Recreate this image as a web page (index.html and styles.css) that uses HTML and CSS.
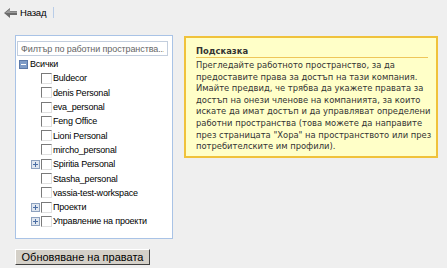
FILE: index.html
```html
<!DOCTYPE html>
<html lang="bg">
<head>
    <meta charset="UTF-8">
    <title>Права</title>
    <link rel="stylesheet" href="styles.css">
</head>
<body>
    <div class="toolbar">
        <a class="back-link" href="#">
            <svg class="back-icon" width="14" height="10" viewBox="0 0 14 10">
                <polygon points="0,5 6,0 6,3 13,3 13,7 6,7 6,10" fill="#6b6b6b"/>
                <polygon points="1,5 6,1 6,3.5 13,3.5 13,5" fill="#9a9a9a"/>
            </svg>
            <span>Назад</span>
        </a>
        <span class="sep"></span>
    </div>

    <div class="main">
        <div class="left">
            <div class="tree-panel">
                <input class="filter" type="text" placeholder="Филтър по работни пространства...">
                <ul class="tree">
                    <li class="root">
                        <span class="node">
                            <svg class="toggle" width="9" height="9" viewBox="0 0 9 9">
                                <rect x="0.5" y="0.5" width="8" height="8" fill="#7e9cc8" stroke="#5a78a8"/>
                                <rect x="2" y="4" width="5" height="1" fill="#fff"/>
                            </svg>
                            <span class="label">Всички</span>
                        </span>
                        <ul class="children">
                            <li><span class="cb"></span><span class="label">Buldecor</span></li>
                            <li><span class="cb"></span><span class="label">denis Personal</span></li>
                            <li><span class="cb"></span><span class="label">eva_personal</span></li>
                            <li><span class="cb"></span><span class="label">Feng Office</span></li>
                            <li><span class="cb"></span><span class="label">Lioni Personal</span></li>
                            <li><span class="cb"></span><span class="label">mircho_personal</span></li>
                            <li class="has-kids">
                                <svg class="toggle" width="9" height="9" viewBox="0 0 9 9">
                                    <rect x="0.5" y="0.5" width="8" height="8" fill="#dfe6ef" stroke="#8ea2bf"/>
                                    <rect x="2" y="4" width="5" height="1" fill="#4b6ea5"/>
                                    <rect x="4" y="2" width="1" height="5" fill="#4b6ea5"/>
                                </svg>
                                <span class="cb"></span><span class="label">Spiritia Personal</span>
                            </li>
                            <li><span class="cb"></span><span class="label">Stasha_personal</span></li>
                            <li><span class="cb"></span><span class="label">vassia-test-workspace</span></li>
                            <li class="has-kids">
                                <svg class="toggle" width="9" height="9" viewBox="0 0 9 9">
                                    <rect x="0.5" y="0.5" width="8" height="8" fill="#dfe6ef" stroke="#8ea2bf"/>
                                    <rect x="2" y="4" width="5" height="1" fill="#4b6ea5"/>
                                    <rect x="4" y="2" width="1" height="5" fill="#4b6ea5"/>
                                </svg>
                                <span class="cb"></span><span class="label">Проекти</span>
                            </li>
                            <li class="has-kids">
                                <svg class="toggle" width="9" height="9" viewBox="0 0 9 9">
                                    <rect x="0.5" y="0.5" width="8" height="8" fill="#dfe6ef" stroke="#8ea2bf"/>
                                    <rect x="2" y="4" width="5" height="1" fill="#4b6ea5"/>
                                    <rect x="4" y="2" width="1" height="5" fill="#4b6ea5"/>
                                </svg>
                                <span class="cb"></span><span class="label">Управление на проекти</span>
                            </li>
                        </ul>
                    </li>
                </ul>
            </div>
            <button class="update-btn">Обновяване на правата</button>
        </div>

        <div class="hint">
            <div class="hint-title">Подсказка</div>
            <div class="hint-text">Прегледайте работното пространство, за да предоставите права за достъп на тази компания. Имайте предвид, че трябва да укажете правата за достъп на онези членове на компанията, за които искате да имат достъп и да управляват определени работни пространства (това можете да направите през страницата "Хора" на пространството или през потребителските им профили).</div>
        </div>
    </div>
</body>
</html>
```

FILE: styles.css
```css
/* Основни стилове */
body {
    margin: 0;
    padding: 0;
    background-color: #efefef;
    font-family: "Liberation Sans", Arial, sans-serif;
    font-size: 9px;
    letter-spacing: -0.2px;
    color: #000;
}
.toolbar {
    display: flex;
    align-items: center;
    height: 25px;
    padding-left: 4px;
}
.back-link {
    display: flex;
    align-items: center;
    gap: 2px;
    color: #000;
    text-decoration: none;
    font-size: 9.5px;
}
.back-icon {
    display: block;
}
.sep {
    width: 1px;
    height: 11px;
    background-color: #b9cde8;
    margin-left: 7px;
}

.main {
    display: flex;
    align-items: flex-start;
    padding: 10px 0 0 15px;
}
.left {
    width: 158px;
}
.tree-panel {
    height: 204px;
    background-color: #fff;
    border: 1px solid #a9c3e6;
    padding: 5px 0 0 1px;
    box-sizing: border-box;
}
.filter {
    display: block;
    width: 151px;
    height: 15px;
    margin: 0;
    padding: 0 3px;
    box-sizing: border-box;
    border: 1px solid #c3cedd;
    font-family: "Liberation Sans", Arial, sans-serif;
    font-size: 9px;
    letter-spacing: -0.1px;
    color: #555;
}
.filter::placeholder {
    color: #666;
}
.tree, .children {
    list-style: none;
    margin: 0;
    padding: 0;
}
.tree {
    margin-top: 1px;
}
.node {
    display: flex;
    align-items: center;
    height: 14.3px;
    padding-left: 2px;
}
.toggle {
    display: block;
    flex: none;
}
.node .label {
    margin-left: 2px;
}
.children li {
    display: flex;
    align-items: center;
    height: 14.3px;
    padding-left: 24px;
}
.children li.has-kids {
    padding-left: 14px;
}
.children li.has-kids .toggle {
    margin-right: 1px;
}
.cb {
    flex: none;
    width: 9px;
    height: 9px;
    border-top: 1px solid #7a7a7a;
    border-left: 1px solid #7a7a7a;
    border-right: 1px solid #e0e0e0;
    border-bottom: 1px solid #e0e0e0;
    background-color: #fff;
    margin-right: 1px;
}

.update-btn {
    display: block;
    margin-top: 10px;
    width: 135px;
    height: 16px;
    padding: 0;
    background-color: #d4d0c8;
    border: 1px solid;
    border-color: #fff #404040 #404040 #fff;
    font-family: "Liberation Sans", Arial, sans-serif;
    font-size: 11px;
    letter-spacing: 0;
    color: #000;
}

.hint {
    width: 254px;
    box-sizing: border-box;
    margin-left: 11px;
    margin-top: 1px;
    background-color: #ffffc8;
    border: 2px solid #f0c23b;
    padding: 8px 2px 3px 10px;
    font-family: "DejaVu Sans", Verdana, sans-serif;
    font-size: 8.4px;
    letter-spacing: 0;
    color: #333;
}
.hint-title {
    font-weight: bold;
    line-height: 10px;
    padding-bottom: 1px;
    border-bottom: 1px solid #eec65a;
    margin: 0 6px 2px 0;
}
.hint-text {
    line-height: 11.6px;
}
```
